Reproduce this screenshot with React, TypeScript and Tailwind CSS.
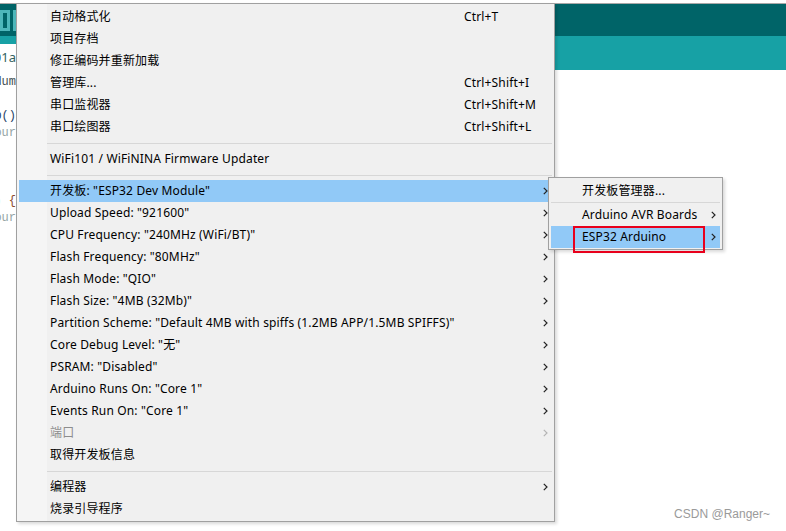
import React from "react";

type Item =
  | { kind: "sep" }
  | { kind: "item"; label: string; shortcut?: string; sub?: boolean; active?: boolean; disabled?: boolean };

const items: Item[] = [
  { kind: "item", label: "自动格式化", shortcut: "Ctrl+T" },
  { kind: "item", label: "项目存档" },
  { kind: "item", label: "修正编码并重新加载" },
  { kind: "item", label: "管理库...", shortcut: "Ctrl+Shift+I" },
  { kind: "item", label: "串口监视器", shortcut: "Ctrl+Shift+M" },
  { kind: "item", label: "串口绘图器", shortcut: "Ctrl+Shift+L" },
  { kind: "sep" },
  { kind: "item", label: "WiFi101 / WiFiNINA Firmware Updater" },
  { kind: "sep" },
  { kind: "item", label: '开发板: "ESP32 Dev Module"', sub: true, active: true },
  { kind: "item", label: 'Upload Speed: "921600"', sub: true },
  { kind: "item", label: 'CPU Frequency: "240MHz (WiFi/BT)"', sub: true },
  { kind: "item", label: 'Flash Frequency: "80MHz"', sub: true },
  { kind: "item", label: 'Flash Mode: "QIO"', sub: true },
  { kind: "item", label: 'Flash Size: "4MB (32Mb)"', sub: true },
  { kind: "item", label: 'Partition Scheme: "Default 4MB with spiffs (1.2MB APP/1.5MB SPIFFS)"', sub: true },
  { kind: "item", label: 'Core Debug Level: "无"', sub: true },
  { kind: "item", label: 'PSRAM: "Disabled"', sub: true },
  { kind: "item", label: 'Arduino Runs On: "Core 1"', sub: true },
  { kind: "item", label: 'Events Run On: "Core 1"', sub: true },
  { kind: "item", label: "端口", sub: true, disabled: true },
  { kind: "item", label: "取得开发板信息" },
  { kind: "sep" },
  { kind: "item", label: "编程器", sub: true },
  { kind: "item", label: "烧录引导程序" },
];

function Chevron({ muted }: { muted?: boolean }) {
  return (
    <svg width="5" height="8" viewBox="0 0 5 8" className="shrink-0">
      <path d="M0.8 0.8 L4 4 L0.8 7.2" fill="none" stroke={muted ? "#b4b4b4" : "#222"} strokeWidth="1.2" />
    </svg>
  );
}

const font = "font-['Segoe_UI','Noto_Sans','Noto_Sans_CJK_SC',sans-serif]";

export default function App() {
  return (
    <div className={`relative w-[786px] h-[531px] overflow-hidden bg-white ${font} text-[12px] tracking-[0.15px] text-black`}>
      {/* IDE window behind */}
      <div className="h-[3px] bg-white" />
      <div className="h-px bg-[#a8a8a8]" />
      <div className="h-[32px] bg-[#006468] flex items-center gap-[3px]">
        <div className="w-[10px] h-[21px] bg-[#4db7bb] flex justify-end pr-[3px]">
          <div className="w-[4px] h-full py-[3px]">
            <div className="w-full h-full bg-[#006468]" />
          </div>
        </div>
        <div className="w-[10px] h-[21px] bg-[#4db7bb]" />
      </div>
      <div className="h-[34px] bg-[#17a1a5] flex items-end">
        <div className="w-[16px] h-[26px] bg-white overflow-hidden flex justify-end items-center">
          <span className="whitespace-nowrap text-[#335f60] text-[13px] tracking-normal pt-[2px]">sketch_apr01a</span>
        </div>
      </div>
      <div className="w-[16px] overflow-hidden font-['Liberation_Mono',monospace] text-[12px] tracking-normal leading-[17px] pt-[2px]">
        {[
          { t: "#include <Ardum", c: "text-[#434f54] h-[19px]" },
          { t: "", c: "h-[17px]" },
          { t: "void setup()", c: "text-[#1e3f66] h-[17px]" },
          { t: "  // put your", c: "text-[#95a5a6] h-[17px]" },
          { t: "", c: "h-[17px]" },
          { t: "", c: "h-[17px]" },
          { t: "", c: "h-[17px]" },
          { t: "void loop() {", c: "text-[#8a4a2a] h-[17px]" },
          { t: "  // put your", c: "text-[#95a5a6] h-[17px]" },
        ].map((l, i) => (
          <div key={i} className={`flex items-end justify-end whitespace-nowrap ${l.c}`}>
            {l.t}
          </div>
        ))}
      </div>

      {/* Tools menu */}
      <div className="absolute left-[16px] top-[3px] w-[539px] border border-[#a0a0a0] bg-[#f0f0f0] pt-[2px] pb-[1px] shadow-[2px_2px_3px_rgba(0,0,0,0.15)]">
        <div className="absolute left-0 top-0 bottom-0 w-[30px] bg-[#f5f5f5]" />
        {items.map((it, i) =>
          it.kind === "sep" ? (
            <div key={i} className="relative h-[10px] flex items-center pl-[30px] pr-[2px]">
              <div className="h-px w-full bg-[#d7d7d7]" />
            </div>
          ) : (
            <div
              key={i}
              className={`relative h-[22px] mx-[2px] flex items-center pl-[31px] pr-[4px] ${it.active ? "bg-[#91c9f7]" : ""} ${it.disabled ? "text-[#8d8d8d]" : ""}`}
            >
              <span className="w-[414px] whitespace-nowrap">{it.label}</span>
              {it.shortcut && <span className="whitespace-nowrap">{it.shortcut}</span>}
              {it.sub && (
                <span className="ml-auto">
                  <Chevron muted={it.disabled} />
                </span>
              )}
            </div>
          )
        )}
      </div>

      {/* Board submenu */}
      <div className="absolute left-[548px] top-[177px] w-[175px] border border-[#a0a0a0] bg-[#f0f0f0] pt-[2px] pb-[1px] shadow-[2px_2px_3px_rgba(0,0,0,0.15)]">
        <div className="h-[21px] mx-[2px] flex items-center pl-[31px]">开发板管理器...</div>
        <div className="h-[3px] flex items-center pl-[2px] pr-[2px]">
          <div className="h-px w-full bg-[#d7d7d7]" />
        </div>
        <div className="h-[22px] mx-[2px] flex items-center pl-[31px] pr-[4px]">
          <span className="whitespace-nowrap">Arduino AVR Boards</span>
          <span className="ml-auto">
            <Chevron />
          </span>
        </div>
        <div className="h-[22px] mx-[2px] flex items-center pl-[31px] pr-[4px] bg-[#91c9f7]">
          <span className="whitespace-nowrap">ESP32 Arduino</span>
          <span className="ml-auto">
            <Chevron />
          </span>
        </div>
      </div>

      {/* red annotation */}
      <div className="absolute left-[573px] top-[226px] w-[132px] h-[27px] border-2 border-[#e8001c]" />

      <div className="absolute right-[16px] bottom-[8px] text-[12px] tracking-normal text-[#9a9a9a] font-['Liberation_Sans',sans-serif]">
        CSDN @Ranger~
      </div>
    </div>
  );
}
